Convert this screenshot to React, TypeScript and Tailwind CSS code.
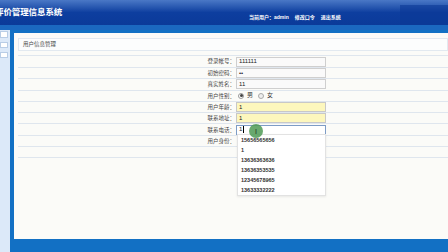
const rows: { label: string; kind: "text" | "radio" | "none"; value?: string; yellow?: boolean; focus?: boolean }[] = [
  { label: "登录帐号：", kind: "text", value: "111111" },
  { label: "初始密码：", kind: "text", value: "••" },
  { label: "真实姓名：", kind: "text", value: "11" },
  { label: "用户性别：", kind: "radio" },
  { label: "用户年龄：", kind: "text", value: "1", yellow: true },
  { label: "联系地址：", kind: "text", value: "1", yellow: true },
  { label: "联系电话：", kind: "text", value: "1", focus: true },
  { label: "用户身份：", kind: "none" },
  { label: "", kind: "none" },
];

const suggestions = ["15656565656", "1", "13636363636", "13636353535", "12345678965", "13633332222"];

function Field({ row }: { row: (typeof rows)[number] }) {
  if (row.kind === "radio") {
    return (
      <div className="flex items-center gap-[3px] pl-[2px] text-[6px] text-[#333]">
        <span className="flex h-[6px] w-[6px] items-center justify-center rounded-full border border-[#999] bg-white">
          <span className="h-[3px] w-[3px] rounded-full bg-[#444]" />
        </span>
        <span>男</span>
        <span className="ml-[2px] h-[6px] w-[6px] rounded-full border border-[#aaa] bg-[#eee]" />
        <span>女</span>
      </div>
    );
  }
  if (row.kind === "none") return null;
  return (
    <div
      className={`flex h-[10px] w-[90px] items-center border pl-[2px] text-[6px] text-[#222] ${
        row.yellow ? "border-[#c8c8c8] bg-[#fdf7bd]" : row.focus ? "border-[#7d9cc6] bg-white" : "border-[#cfcfcf] bg-[#fafafa]"
      }`}
    >
      {row.value}
      {row.focus && <span className="ml-[1px] h-[7px] w-px bg-black" />}
    </div>
  );
}

export default function App() {
  return (
    <div className="relative flex h-[252px] w-[448px] flex-col overflow-hidden bg-[#1270c4] font-['Liberation_Sans','Noto_Sans_CJK_SC',sans-serif]">
      {/* header */}
      <div className="relative flex h-[25px] shrink-0 items-center bg-gradient-to-b from-[#4a78c6] via-[#0d3e9f] to-[#0b3a99]">
        <span className="ml-[-5px] text-[8.5px] font-bold tracking-[-0.1px] text-white">评价管理信息系统</span>
        <div className="absolute left-[249px] top-[14px] flex gap-[6px] text-[5px] font-bold text-white">
          <span>当前用户：admin</span>
          <span>修改口令</span>
          <span>退出系统</span>
        </div>
        <div className="absolute right-0 top-[5px] h-[20px] w-[48px] bg-[#0b3896]/60" />
      </div>
      <div className="h-[5px] shrink-0 bg-[#1b68c0]" />

      <div className="flex flex-1">
        {/* sidebar */}
        <div className="flex w-[10px] shrink-0 flex-col gap-[4px] bg-[#dce9f9] pt-[1px]">
          <div className="h-[7px] w-[8px] border border-[#b9cde6] bg-white" />
          <div className="h-[6px] w-[8px] border border-[#b9cde6] bg-white" />
          <div className="h-[6px] w-[8px] border border-[#b9cde6] bg-white" />
        </div>

        {/* main frame */}
        <div className="flex flex-1 flex-col pb-[13px] pl-[4px] pt-[3px]">
          <div className="relative flex-1 bg-[#fbfbf8] pl-[4px] pt-[5px]">
            <div className="flex h-[13px] items-center border border-[#e2e9f0] bg-[#fcfdfd] pl-[4px] text-[5.5px] text-[#444]">
              用户信息管理
            </div>
            <div className="mt-[4px] border-t border-[#dfe6ee]">
              {rows.map((r, i) => (
                <div key={i} className={`flex items-center border-b border-[#dfe6ee] ${i === 0 ? "h-[12px]" : "h-[11.3px]"}`}>
                  <div className="w-[218px] shrink-0 pr-[1px] text-right text-[5.5px] text-[#444]">{r.label}</div>
                  <Field row={r} />
                </div>
              ))}
            </div>

            {/* autocomplete dropdown */}
            <div className="absolute left-[223px] top-[101px] w-[89px] border border-[#e2e2e2] bg-white pl-[3px] shadow-[0_1px_2px_rgba(0,0,0,0.08)]">
              {suggestions.map((s) => (
                <div key={s} className="flex h-[10px] items-center text-[5.5px] font-bold text-[#333]">
                  {s}
                </div>
              ))}
            </div>

            {/* pointer highlight */}
            <div className="absolute left-[235px] top-[91px] flex h-[14px] w-[14px] items-center justify-center rounded-full bg-[#4f9a55]/85">
              <span className="text-[7px] leading-none text-[#1a2a1a]">I</span>
            </div>
          </div>
        </div>
      </div>
    </div>
  );
}
